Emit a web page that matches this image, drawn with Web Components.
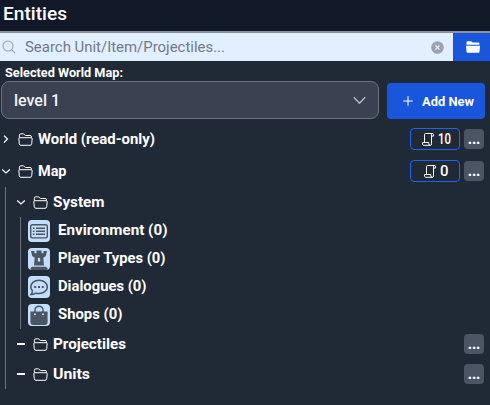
<!DOCTYPE html>
<html lang="en">
<head>
<meta charset="utf-8">
<title>Entities</title>
<style>
body{margin:0;background:#202a37;font-family:Roboto,"Liberation Sans",sans-serif;color:#fff;width:490px;height:405px;overflow:hidden}
</style>
</head>
<body>
<entities-panel></entities-panel>
<script>
const ICONS = {
  search:'<svg width="14" height="14" viewBox="0 0 14 14" fill="none" stroke="#9ca3af" stroke-width="1.1"><circle cx="6" cy="6" r="5"/><path d="M9.6 9.6l3.5 3.5"/></svg>',
  clear:'<svg width="13" height="13" viewBox="0 0 13 13"><circle cx="6.5" cy="6.5" r="6.3" fill="#9ca3af"/><path d="M4.5 4.5l4 4m0-4l-4 4" stroke="#e1effe" stroke-width="1.2"/></svg>',
  solid:'<svg width="14" height="12" viewBox="0 0 14 12" fill="#fff"><path d="M.5 3.8V1.3Q.5.2 1.6.2H5l1.7 1.2h5.7q1 0 1 1v1.4zM0 4.8h14l-.5 6q-.1 1-1 1H1.5q-.9 0-1-1z"/></svg>',
  chevron:'<svg width="13" height="9" viewBox="0 0 13 9" fill="none" stroke="#b5bac4" stroke-width="1.4"><path d="M.8 1.2l5.7 6 5.7-6"/></svg>',
  plus:'<svg width="10" height="10" viewBox="0 0 10 10" stroke="#fff" stroke-width="1.1"><path d="M.2 5h9.6M5 .2v9.6"/></svg>',
  closed:'<svg width="10" height="10" viewBox="0 0 10 10" fill="none" stroke="#fff" stroke-width="1.3"><path d="M3 1.6L6.4 5 3 8.6"/></svg>',
  open:'<svg width="10" height="10" viewBox="0 0 10 10" fill="none" stroke="#fff" stroke-width="1.2"><path d="M1.2 3.5L5 7l3.8-3.5"/></svg>',
  leaf:'<svg width="10" height="10" viewBox="0 0 10 10"><path d="M1 4h8v2H1z" fill="#fff"/></svg>',
  folder:'<svg width="15" height="13" viewBox="0 0 15 13" fill="none" stroke="#fff" stroke-width="1" stroke-linejoin="round"><path d="M1.4 4.7V2.2Q1.4.8 2.8.8h2.1q.6 0 1 .4L7 2.1q.4.4 1 .4h4q1.5 0 1.5 1.3v.9M1.8 4.7h11.4q1.1 0 1 1.1l-.5 4.9q-.2 1.6-1.7 1.6H3q-1.5 0-1.7-1.6L.8 5.8q-.1-1.1 1-1.1z"/></svg>',
  scroll:'<svg width="12" height="13" viewBox="0 0 12 13" fill="none" stroke="#fff" stroke-width="1" stroke-linejoin="round"><path d="M2.5 9.5v-8q0-1 1-1h7q-1 0-1 1.3v9q0 1.5-1.2 1.5H1.6Q.5 12.3.5 10V9.5h6.3v1.2q0 1.6 1.5 1.6M9.5 3.1h2V1.6q0-1.1-1-1.1"/></svg>',
  list:'<svg width="22" height="22" viewBox="0 0 22 22" fill="none" stroke="#4b5563"><rect x="2.7" y="4.7" width="16.6" height="13.2" rx="1.8" stroke-width="1.4"/><path d="M8 8.2h9M8 11.2h9M8 14.2h9" stroke-width="1.4"/><path d="M4.9 8.2h1.6M4.9 11.2h1.6M4.9 14.2h1.6" stroke-width="1.6"/></svg>',
  rook:'<svg width="22" height="22" viewBox="0 0 22 22" fill="#4b5563"><path d="M3 3h3.5v2.3h2V2.4h5v2.9h2V3H19l-1.2 5-2.5 1.8.7 7.6H6l.7-7.6L4.2 8zM4.2 18.7h13.6l1.7 1.4V22h-17v-1.9z"/><path d="M9.8 13.4V11q0-1.3 1.2-1.3t1.2 1.3v2.4z" fill="#c3ddfd"/></svg>',
  chat:'<svg width="22" height="22" viewBox="0 0 22 22" fill="none" stroke="#4b5563" stroke-width="1.5"><path d="M4.4 14.7Q2.8 13 2.8 10.9C2.8 7 6.4 4.2 11 4.2s8.3 2.8 8.3 6.7-3.7 6.7-8.3 6.7q-1.8 0-3.3-.5-2 1.5-4.7 1.5 1.4-1.6 1.4-3.9z"/><path d="M6.2 10h2v2h-2zM10 10h2v2h-2zM13.8 10h2v2h-2z" fill="#4b5563" stroke="none"/></svg>',
  bag:'<svg width="22" height="22" viewBox="0 0 22 22"><path d="M2.4 7.4h17.2V18q0 3-3 3H5.4q-3 0-3-3z" fill="#4b5563"/><path d="M7 10V6.2a4 4 0 0 1 8 0V10" fill="none" stroke="#4b5563" stroke-width="1.5"/><circle cx="7" cy="10.2" r="1" fill="#c3ddfd"/><circle cx="15" cy="10.2" r="1" fill="#c3ddfd"/></svg>'
};
function define(name, render, ready){
  customElements.define(name, class extends HTMLElement{
    connectedCallback(){
      if(this.shadowRoot) return;
      this.attachShadow({mode:'open'}).innerHTML = render(this);
      if(ready) ready(this);
    }
  });
}
define('ui-icon', el => `<style>:host{display:block;flex:none}svg{display:block}</style>${ICONS[el.getAttribute('name')]}`);
/* Text whose letters are widened to reach the width given in "span". */
define('ui-text', el => `<style>:host{display:block;flex:none;white-space:nowrap}span{display:inline-block;transform-origin:0 50%}</style><span>${el.getAttribute('label')}</span>`,
  el => {
    const s = el.shadowRoot.querySelector('span'), target = +el.getAttribute('span');
    if(target){
      s.style.transform = `scaleX(${target / s.getBoundingClientRect().width})`;
      el.style.width = target + 'px';
    }
  });
define('panel-title', () => `<style>:host{display:flex;align-items:center;height:31px;padding:0 3px 3px;box-sizing:border-box;background:#111827;font-size:18px;line-height:20px;font-weight:500}</style><ui-text label="Entities" span="64"></ui-text>`);
define('search-bar', () => `<style>:host{display:flex;height:30px;box-sizing:border-box;border-top:2px solid #8b8f98;background:#e1effe}
.field{flex:1;display:flex;align-items:center;padding:0 9.5px 0 2px;color:#717a89;font-size:15px}
ui-text{margin:0 auto 0 9px}.go{width:37px;background:#1a56db;display:flex;align-items:center;padding-left:13px;box-sizing:border-box}</style>
<div class="field"><ui-icon name="search"></ui-icon><ui-text label="Search Unit/Item/Projectiles..." span="200"></ui-text><ui-icon name="clear"></ui-icon></div><div class="go"><ui-icon name="solid"></ui-icon></div>`);
define('map-picker', () => `<style>:host{display:block;height:58px}.cap{height:20px;padding:4px 5px 0;box-sizing:border-box;font-size:12px;line-height:16px;font-weight:700}
.row{display:flex;align-items:flex-end;gap:8px;padding-left:1px}
.select{width:378px;height:38px;box-sizing:border-box;border:1px solid #6b7280;border-radius:8px;background:#3a4252;display:flex;align-items:center;justify-content:space-between;padding:1px 12px 0;font-size:16px;font-weight:500;color:#f3f4f6}
.add{width:98px;height:36px;box-sizing:border-box;border-radius:4px;background:#1a56db;display:flex;align-items:center;gap:9px;padding-left:16px;font-size:12.5px;font-weight:700}</style>
<div class="cap"><ui-text label="Selected World Map:" span="118"></ui-text></div>
<div class="row"><div class="select"><ui-text label="level 1" span="46"></ui-text><ui-icon name="chevron"></ui-icon></div><div class="add"><ui-icon name="plus"></ui-icon><ui-text label="Add New" span="52"></ui-text></div></div>`);
define('more-button', () => `<style>:host{display:block;flex:none;width:20px;height:20px;border-radius:4px;background:#4b5563;text-align:center;font-size:14px;line-height:20px;font-weight:900}</style><ui-text label="..."></ui-text>`);
define('count-badge', el => `<style>:host{display:flex;flex:none;width:50px;height:22px;box-sizing:border-box;border:1px solid #1c64f2;border-radius:4px;align-items:center;justify-content:center;gap:4px;padding-left:2px;font-size:14px;font-weight:500}</style><ui-icon name="scroll"></ui-icon><ui-text label="${el.getAttribute('value')}" span="${el.getAttribute('value').length>1?13:8.5}"></ui-text>`);
define('tree-row', el => `<style>:host{display:flex;align-items:center;height:30px;padding-right:6px;font-size:14px;font-weight:700;line-height:16px}
.label{margin:0 auto 0 5px;padding-bottom:1px}ui-icon+ui-icon{margin-left:6.5px}.actions{display:flex;align-items:center;gap:4px}</style>
<ui-icon name="${el.getAttribute('state')}"></ui-icon><ui-icon name="folder"></ui-icon><ui-text class="label" label="${el.getAttribute('label')}" span="${el.getAttribute('span')}"></ui-text><div class="actions"><slot></slot></div>`);
define('entity-row', el => `<style>:host{display:flex;align-items:center;gap:8px;height:28px;font-size:14px;font-weight:700;line-height:16px}ui-text{padding-bottom:2px}.tile{width:22px;height:22px;border-radius:4px;background:#c3ddfd;overflow:hidden}</style>
<div class="tile"><ui-icon name="${el.getAttribute('icon')}"></ui-icon></div><ui-text label="${el.getAttribute('label')}" span="${el.getAttribute('span')}"></ui-text>`);
define('tree-branch', () => `<style>:host{display:block;border-left:1px solid #6b7280}</style><slot></slot>`);
define('entities-panel', () => `<style>:host{display:block}
.tree{padding:4px 0 0 1px}.top{height:32px}.map{margin-left:4px}.map>tree-row{padding-left:10px}.sys{margin-left:14px;padding-left:7px}</style>
<panel-title></panel-title><search-bar></search-bar><map-picker></map-picker>
<div class="tree">
<tree-row class="top" state="closed" label="World (read-only)" span="117"><count-badge value="10"></count-badge><more-button></more-button></tree-row>
<tree-row class="top" state="open" label="Map" span="28.5"><count-badge value="0"></count-badge><more-button></more-button></tree-row>
<tree-branch class="map">
<tree-row state="open" label="System" span="51.5"></tree-row>
<tree-branch class="sys">
<entity-row icon="list" label="Environment (0)" span="109.5"></entity-row>
<entity-row icon="rook" label="Player Types (0)" span="107.5"></entity-row>
<entity-row icon="chat" label="Dialogues (0)" span="88.5"></entity-row>
<entity-row icon="bag" label="Shops (0)" span="64.5"></entity-row>
</tree-branch>
<tree-row state="leaf" label="Projectiles" span="73"><more-button></more-button></tree-row>
<tree-row state="leaf" label="Units" span="37"><more-button></more-button></tree-row>
</tree-branch>
</div>`);
</script>
</body>
</html>
